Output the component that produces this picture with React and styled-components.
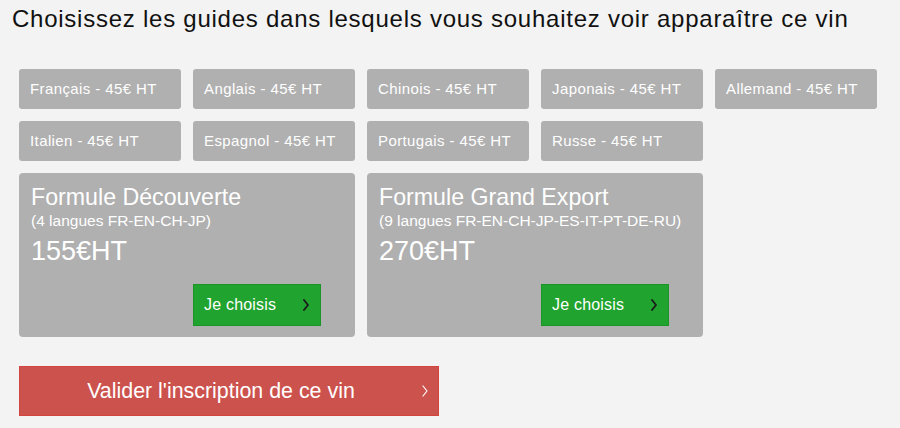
import React from "react";
import styled, { createGlobalStyle } from "styled-components";

const Global = createGlobalStyle`
  html, body { margin: 0; padding: 0; background: #f3f3f3; }
  body { font-family: "Liberation Sans", Arial, sans-serif; }
`;

const Page = styled.div`
  width: 900px;
  height: 428px;
  background: #f3f3f3;
  overflow: hidden;
`;

const Title = styled.h1`
  margin: 0;
  padding: 5px 12px 0;
  font-size: 24px;
  line-height: 28px;
  letter-spacing: 0.75px;
  font-weight: 400;
  color: #111;
  white-space: nowrap;
`;

const Content = styled.div`
  padding: 36px 19px 0;
`;

const Grid = styled.div`
  display: grid;
  grid-template-columns: repeat(5, 162px);
  grid-auto-rows: auto;
  gap: 12px;
`;

const Chip = styled.div`
  height: 40px;
  line-height: 40px;
  padding: 0 11px;
  background: #b0b0b0;
  border-radius: 3px;
  color: #fff;
  font-size: 15px;
  letter-spacing: 0.4px;
  white-space: nowrap;
`;

const Card = styled.div`
  grid-column: span 2;
  height: 164px;
  box-sizing: border-box;
  background: #b0b0b0;
  border-radius: 4px;
  padding: 11px 34px 11px 12px;
  display: flex;
  flex-direction: column;
  color: #fff;
  white-space: nowrap;
`;

const CardTitle = styled.div`
  font-size: 23.2px;
  line-height: 26px;
`;

const CardSub = styled.div`
  margin-top: 3px;
  font-size: 15.5px;
  line-height: 16px;
`;

const Price = styled.div`
  margin-top: 6px;
  font-size: 27px;
  line-height: 32px;
`;

const ChooseButton = styled.button`
  margin-top: auto;
  align-self: flex-end;
  width: 128px;
  height: 42px;
  box-sizing: border-box;
  border: 1px solid #1b9528;
  background: #21a32f;
  color: #fff;
  font-family: inherit;
  font-size: 16px;
  letter-spacing: 0.2px;
  padding: 0 11px 0 10px;
  display: flex;
  align-items: center;
  justify-content: space-between;
  cursor: pointer;
`;

const SubmitButton = styled.button`
  margin-top: 29px;
  width: 420px;
  height: 50px;
  box-sizing: border-box;
  border: 1px solid #d4443f;
  background: #cc524d;
  color: #fff;
  font-family: inherit;
  font-size: 21.4px;
  display: flex;
  align-items: center;
  padding: 0 10px 0 0;
  cursor: pointer;
`;

const SubmitLabel = styled.span`
  flex: 1;
  text-align: center;
`;

const Chevron = ({ color, weight }) => (
  <svg width="6" height="12" viewBox="0 0 6 12" aria-hidden="true">
    <path d="M1 1 L5 6 L1 11" fill="none" stroke={color} strokeWidth={weight} strokeLinecap="round" strokeLinejoin="round" />
  </svg>
);

const langs = [
  "Français", "Anglais", "Chinois", "Japonais", "Allemand",
  "Italien", "Espagnol", "Portugais", "Russe",
];

const plans = [
  { name: "Formule Découverte", sub: "(4 langues FR-EN-CH-JP)", price: "155€HT" },
  { name: "Formule Grand Export", sub: "(9 langues FR-EN-CH-JP-ES-IT-PT-DE-RU)", price: "270€HT" },
];

export default function App() {
  return (
    <Page>
      <Global />
      <Title>Choisissez les guides dans lesquels vous souhaitez voir apparaître ce vin</Title>
      <Content>
        <Grid>
          {langs.map((l) => (
            <Chip key={l}>{l} - 45€ HT</Chip>
          ))}
          <div />
          {plans.map((p) => (
            <Card key={p.name}>
              <CardTitle>{p.name}</CardTitle>
              <CardSub>{p.sub}</CardSub>
              <Price>{p.price}</Price>
              <ChooseButton>
                <span>Je choisis</span>
                <Chevron color="#1a1a1a" weight={1.8} />
              </ChooseButton>
            </Card>
          ))}
        </Grid>
        <SubmitButton>
          <SubmitLabel>Valider l'inscription de ce vin</SubmitLabel>
          <Chevron color="#fff" weight={1.2} />
        </SubmitButton>
      </Content>
    </Page>
  );
}
